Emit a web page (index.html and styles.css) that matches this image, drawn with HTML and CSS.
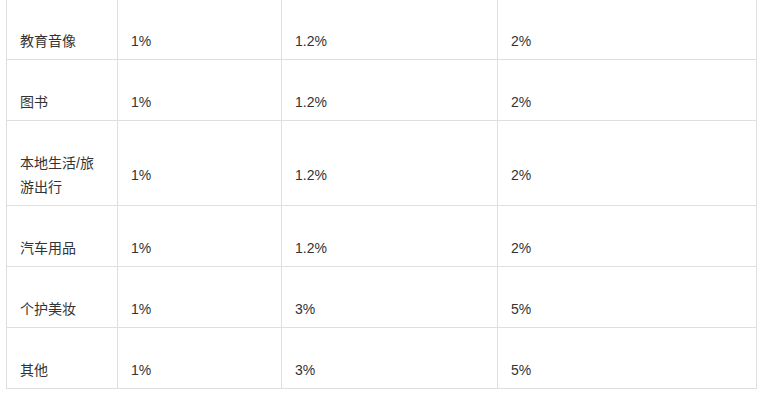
FILE: index.html
```html
<!DOCTYPE html>
<html lang="zh-CN">
<head>
<meta charset="utf-8">
<title>费率表</title>
<link rel="stylesheet" href="styles.css">
</head>
<body>
<table class="rates">
  <colgroup>
    <col class="c1"><col class="c2"><col class="c3"><col class="c4">
  </colgroup>
  <tbody>
    <tr><td>教育音像</td><td>1%</td><td>1.2%</td><td>2%</td></tr>
    <tr><td>图书</td><td>1%</td><td>1.2%</td><td>2%</td></tr>
    <tr><td>本地生活/旅<br>游出行</td><td>1%</td><td>1.2%</td><td>2%</td></tr>
    <tr><td>汽车用品</td><td>1%</td><td>1.2%</td><td>2%</td></tr>
    <tr><td>个护美妆</td><td>1%</td><td>3%</td><td>5%</td></tr>
    <tr><td>其他</td><td>1%</td><td>3%</td><td>5%</td></tr>
  </tbody>
</table>
</body>
</html>
```
FILE: styles.css
```css
html, body {
  margin: 0;
  padding: 0;
  background: #ffffff;
}
body {
  padding-left: 6px;
  font-family: "Liberation Sans", "Noto Sans CJK SC", Arial, sans-serif;
  font-size: 14px;
  color: #333333;
}
.rates {
  border-collapse: collapse;
  table-layout: fixed;
  width: 750px;
  margin-top: -2px;
}
.c1 { width: 111px; }
.c2 { width: 164px; }
.c3 { width: 216px; }
.c4 { width: 259px; }
.rates td {
  border: 1px solid #dfdfdf;
  padding: 30px 8px 6px 13px;
  line-height: 24px;
  vertical-align: middle;
  text-align: left;
}
```
